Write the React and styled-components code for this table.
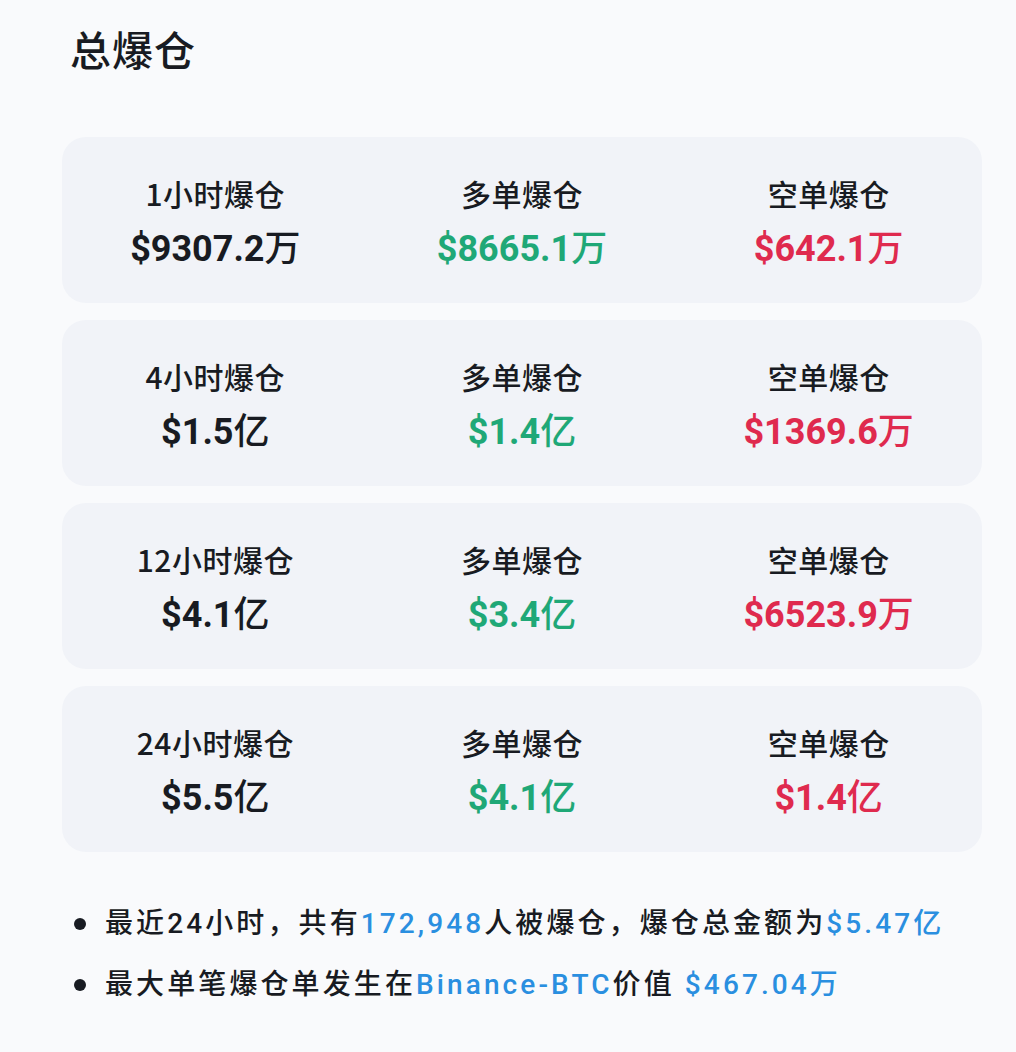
import React from "react";
import styled, { createGlobalStyle } from "styled-components";

const GlobalStyle = createGlobalStyle`
  html, body {
    margin: 0;
    padding: 0;
    background: #f9fafc;
  }
  body {
    font-family: "Roboto", "Noto Sans CJK SC", sans-serif;
    color: #181b22;
  }
`;

const Page = styled.div`
  width: 1016px;
  height: 1052px;
  box-sizing: border-box;
  padding: 22px 34px 0 62px;
  overflow: hidden;
`;

const Title = styled.h1`
  margin: 0 0 0 8px;
  font-family: "Noto Sans CJK SC", sans-serif;
  font-size: 41px;
  font-weight: 500;
  line-height: 52px;
  letter-spacing: 1px;
`;

const CardList = styled.div`
  display: flex;
  flex-direction: column;
  gap: 17px;
  margin-top: 63px;
`;

const Card = styled.div`
  display: grid;
  grid-template-columns: repeat(3, 1fr);
  box-sizing: border-box;
  height: 166px;
  padding-top: 4px;
  background: #f1f3f8;
  border-radius: 24px;
  align-items: center;
`;

const Cell = styled.div`
  display: flex;
  flex-direction: column;
  align-items: center;
  gap: 10px;
`;

const Label = styled.div`
  font-family: "Noto Sans CJK SC", sans-serif;
  font-size: 30px;
  font-weight: 500;
  line-height: 40px;
  letter-spacing: 0.5px;
`;

const Value = styled.div`
  font-size: 36px;
  font-weight: 700;
  line-height: 44px;
  color: ${(p) =>
    p.$tone === "up" ? "#1fa877" : p.$tone === "down" ? "#df2a4e" : "#181b22"};

  span {
    font-family: "Noto Sans CJK SC", sans-serif;
    font-weight: 500;
  }
`;

const Notes = styled.ul`
  list-style: none;
  margin: 52px 0 0 12px;
  padding: 0;
  display: flex;
  flex-direction: column;
  gap: 21px;
`;

const Note = styled.li`
  display: flex;
  align-items: center;
  gap: 19px;
  font-size: 28px;
  font-weight: 500;
  line-height: 40px;
  letter-spacing: 3.1px;
  white-space: nowrap;

  &::before {
    content: "";
    width: 12px;
    height: 12px;
    border-radius: 50%;
    background: #181b22;
    flex: none;
  }
`;

const Hl = styled.span`
  color: #2a8fe0;
`;

const rows = [
  { span: "1小时爆仓", total: "$9307.2", tu: "万", long: "$8665.1", lu: "万", short: "$642.1", su: "万" },
  { span: "4小时爆仓", total: "$1.5", tu: "亿", long: "$1.4", lu: "亿", short: "$1369.6", su: "万" },
  { span: "12小时爆仓", total: "$4.1", tu: "亿", long: "$3.4", lu: "亿", short: "$6523.9", su: "万" },
  { span: "24小时爆仓", total: "$5.5", tu: "亿", long: "$4.1", lu: "亿", short: "$1.4", su: "亿" },
];

const Stat = ({ label, value, unit, tone }) => (
  <Cell>
    <Label>{label}</Label>
    <Value $tone={tone}>
      {value}
      <span>{unit}</span>
    </Value>
  </Cell>
);

export default function App() {
  return (
    <Page>
      <GlobalStyle />
      <Title>总爆仓</Title>
      <CardList>
        {rows.map((r) => (
          <Card key={r.span}>
            <Stat label={r.span} value={r.total} unit={r.tu} />
            <Stat label="多单爆仓" value={r.long} unit={r.lu} tone="up" />
            <Stat label="空单爆仓" value={r.short} unit={r.su} tone="down" />
          </Card>
        ))}
      </CardList>
      <Notes>
        <Note>
          <div>
            最近24小时，共有<Hl>172,948</Hl>人被爆仓，爆仓总金额为<Hl>$5.47亿</Hl>
          </div>
        </Note>
        <Note>
          <div>
            最大单笔爆仓单发生在<Hl>Binance-BTC</Hl>价值 <Hl>$467.04万</Hl>
          </div>
        </Note>
      </Notes>
    </Page>
  );
}
